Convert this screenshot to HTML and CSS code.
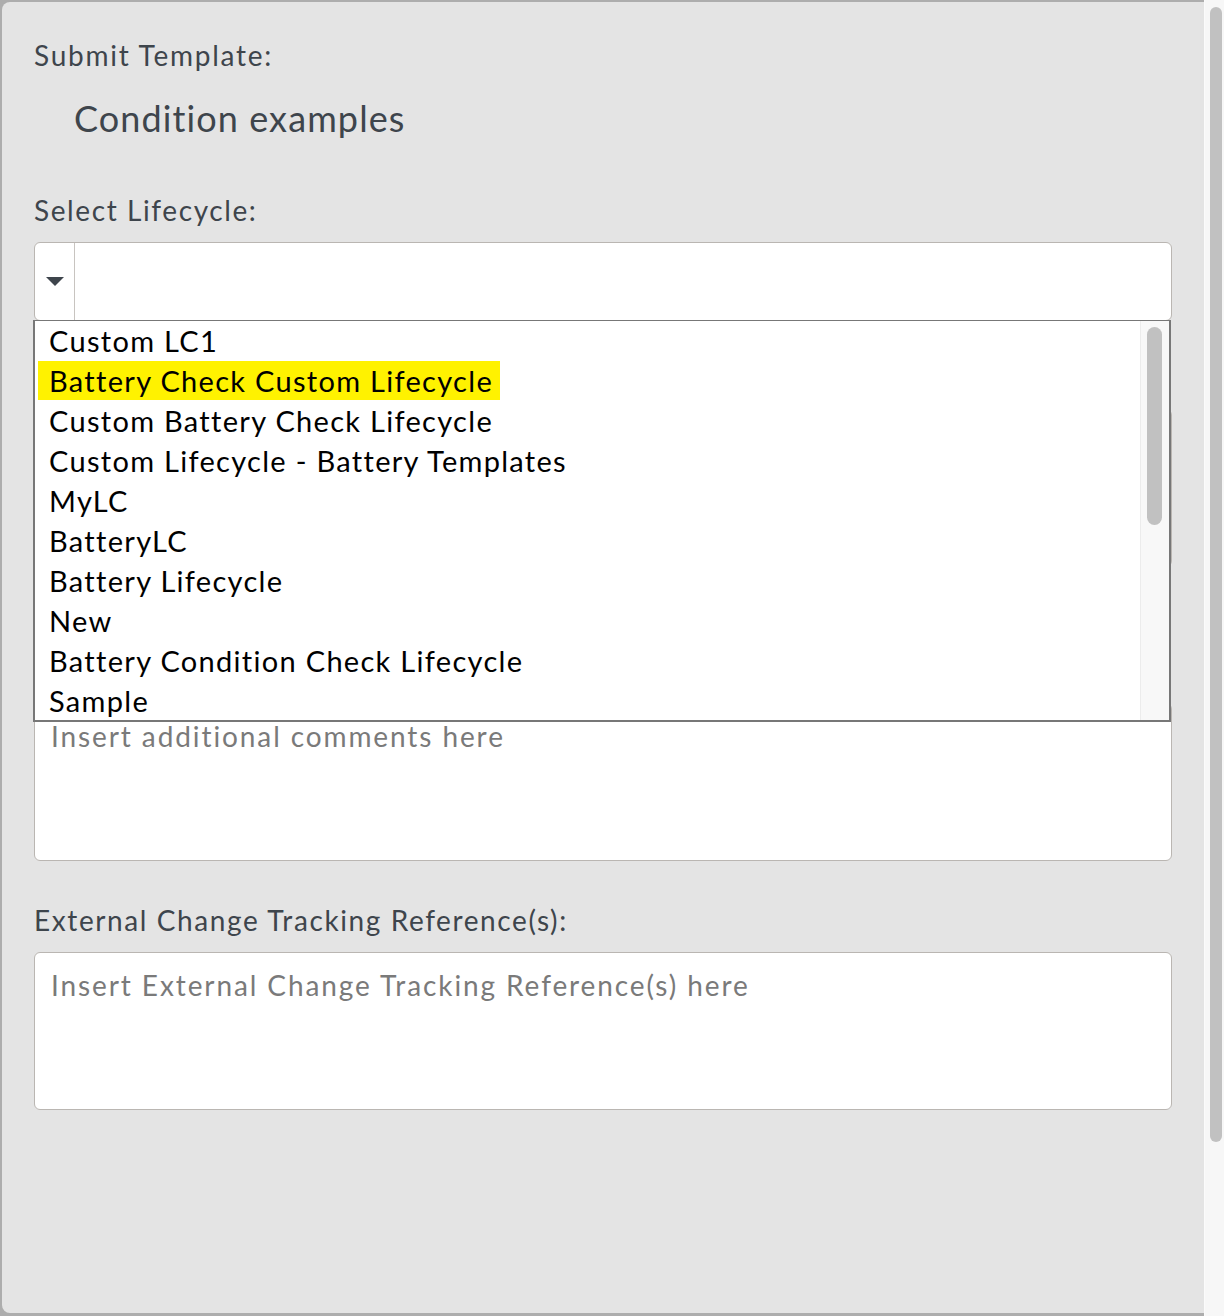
FILE: index.html
```html
<!DOCTYPE html>
<html lang="en">
<head>
  <meta charset="UTF-8" />
  <title>Submit Template</title>
  <link rel="stylesheet" href="styles.css">
</head>
<body>
  <div class="modal">
    <div class="title">Submit Template:</div>
    <div class="template-name">Condition examples</div>

    <label class="field-label first-label">Select Lifecycle:</label>
    <div class="select-wrap">
      <div class="select-box">
        <div class="select-toggle"><span class="caret"></span></div>
        <div class="select-value"></div>
      </div>

      <!-- open dropdown -->
      <div class="dropdown">
        <ul class="options">
          <li><span>Custom LC1</span></li>
          <li class="active"><span>Battery Check Custom Lifecycle</span></li>
          <li><span>Custom Battery Check Lifecycle</span></li>
          <li><span>Custom Lifecycle - Battery Templates</span></li>
          <li><span>MyLC</span></li>
          <li><span>BatteryLC</span></li>
          <li><span>Battery Lifecycle</span></li>
          <li><span>New</span></li>
          <li><span>Battery Condition Check Lifecycle</span></li>
          <li><span>Sample</span></li>
        </ul>
        <div class="list-scroll"><div class="list-thumb"></div></div>
      </div>
    </div>

    <div class="hidden-field"></div>

    <textarea class="text-area comments" placeholder="Insert additional comments here"></textarea>

    <label class="field-label">External Change Tracking Reference(s):</label>
    <textarea class="text-area" placeholder="Insert External Change Tracking Reference(s) here"></textarea>
  </div>

  <div class="page-scroll"><div class="page-thumb"></div></div>
</body>
</html>
```

FILE: styles.css
```css
body {
  margin: 0;
  height: 1316px;
  display: flex;
  background: #adadad;
  font-family: Lato, 'Open Sans', sans-serif;
  color: #3e454c;
  overflow: hidden;
}

.modal {
  flex: 1;
  margin: 2px 0 3px 2px;
  padding: 0 32px;
  background: #e4e4e4;
  border-radius: 8px 0 0 8px;
  display: flex;
  flex-direction: column;
}

.title {
  margin-top: 38px;
  font-size: 28px;
  line-height: 30px;
  letter-spacing: 1.75px;
}

.template-name {
  margin: 30px 0 0 40px;
  font-size: 36px;
  line-height: 36px;
  letter-spacing: 1.1px;
}

.field-label {
  display: block;
  font-size: 28px;
  line-height: 32px;
  letter-spacing: 1.6px;
}

.first-label {
  margin-top: 58px;
}

.select-wrap {
  position: relative;
  margin-top: 16px;
}

.select-box {
  height: 77px;
  display: flex;
  background: #fff;
  border: 1px solid #bab6b2;
  border-radius: 6px;
}

.select-toggle {
  width: 39px;
  border-right: 1px solid #c8c4c0;
  display: flex;
  align-items: center;
  justify-content: center;
}

.caret {
  width: 0;
  height: 0;
  border-left: 9px solid transparent;
  border-right: 9px solid transparent;
  border-top: 9px solid #3e454c;
}

.select-value {
  flex: 1;
}

.dropdown {
  position: absolute;
  left: -1px;
  right: 1px;
  top: 78px;
  height: 399px;
  display: flex;
  background: #fff;
  border: 2px solid #777;
  border-top-width: 1px;
  z-index: 2;
}

.options {
  flex: 1;
  margin: 0;
  padding: 0;
  list-style: none;
  color: #000;
  font-size: 29px;
  letter-spacing: 1.3px;
}

.options li {
  height: 40px;
  line-height: 39px;
  padding-left: 3px;
}

.options li span {
  display: inline-block;
  padding: 0 7px 0 11px;
}

.options li.active span {
  background: #fff200;
}

.list-scroll {
  width: 28px;
  background: #f8f8f8;
  border-left: 1px solid #ececec;
  padding-top: 6px;
}

.list-thumb {
  width: 15px;
  height: 198px;
  margin-left: 6px;
  background: #c1c1c1;
  border-radius: 8px;
}

.hidden-field {
  margin-top: 88px;
  height: 156px;
  background: #fff;
  border: 1px solid #bab6b2;
  border-radius: 6px;
}

.text-area {
  margin-top: 16px;
  height: 158px;
  padding: 15px 16px;
  box-sizing: border-box;
  font-family: inherit;
  font-size: 28px;
  letter-spacing: 1.9px;
  color: #3e454c;
  background: #fff;
  border: 1.5px solid #bab6b2;
  border-radius: 6px;
  resize: none;
}

.text-area.comments {
  margin-top: 136px;
}

.text-area::placeholder {
  color: #7a7a7a;
}

.text-area + .field-label {
  margin-top: 43px;
}

.page-scroll {
  width: 19px;
  background: #f7f7f7;
  border-left: 1px solid #fbfbfb;
}

.page-thumb {
  width: 12px;
  height: 1135px;
  margin: 7px 0 0 5px;
  background: #c1c1c1;
  border-radius: 6px;
}
```
